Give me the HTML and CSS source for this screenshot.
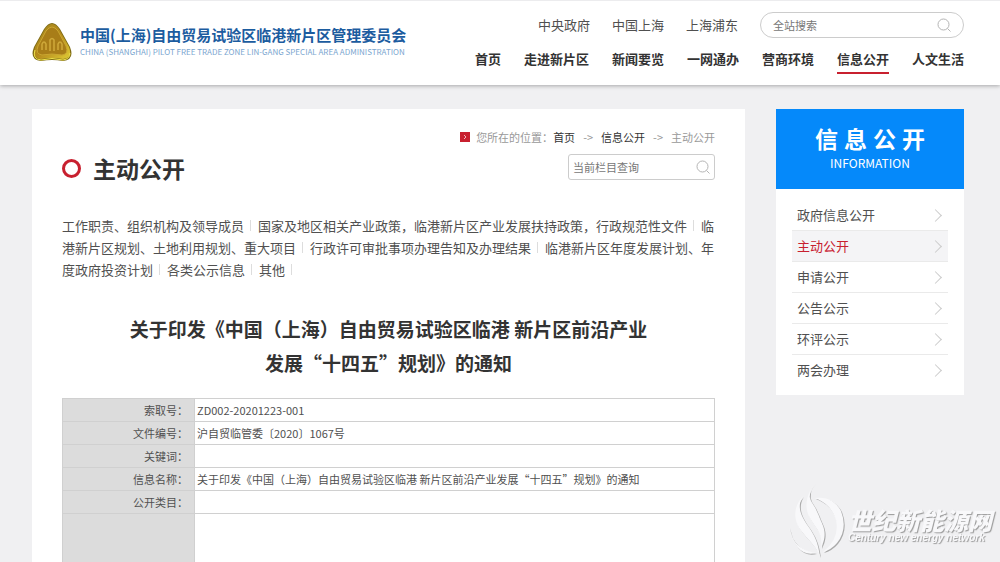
FILE: index.html
```html
<!DOCTYPE html>
<html lang="zh-CN">
<head>
  <meta charset="UTF-8" />
  <meta name="viewport" content="width=device-width, initial-scale=1.0" />
  <title>主动公开 - 中国(上海)自由贸易试验区临港新片区管理委员会</title>
  <link rel="stylesheet" href="styles.css">
</head>
<body>
  <header class="site-header">
    <a href="#" class="brand">
      <svg class="brand-logo" viewBox="0 0 40 40" aria-hidden="true">
        <defs>
          <linearGradient id="gold" x1="0" y1="0" x2="1" y2="1">
            <stop offset="0" stop-color="#a58a20" />
            <stop offset="0.5" stop-color="#b58a1c" />
            <stop offset="1" stop-color="#e0cc35" />
          </linearGradient>
        </defs>
        <path d="M12 7Q20-5 28 7L38 25Q43 38 31 39Q20 37 9 39Q-3 38 2 25Z" fill="#7d6a14" />
        <path d="M13 7Q20-3 27 7L37 25Q41 36 31 37Q20 35 9 37Q0 36 3 25Z" fill="url(#gold)" />
        <path d="M14 9Q20 1 26 9L34 24Q37 32 30 33Q20 31 10 33Q3 32 6 24Z" fill="#a87d18" stroke="#c9a530" />
        <path d="M10 28V22Q12 18 14 22V28M18 29V18Q20 15 22 18V29M26 28V22Q28 18 30 22V28" fill="none" stroke="#cfa93a" stroke-width="1.5" />
        <path d="M3 28Q0 37 9 38Q20 35 31 38Q38 37 38 31" fill="none" stroke="#f0e24c" />
      </svg>
      <span class="brand-text">
        <strong>中国(上海)自由贸易试验区临港新片区管理委员会</strong>
        <small>CHINA (SHANGHAI) PILOT FREE TRADE ZONE LIN-GANG SPECIAL AREA ADMINISTRATION</small>
      </span>
    </a>

    <div class="header-right">
      <div class="top-row">
        <a href="#">中央政府</a>
        <a href="#">中国上海</a>
        <a href="#">上海浦东</a>
        <form class="search site-search">
          <input type="text" placeholder="全站搜索" aria-label="全站搜索">
          <button type="button" aria-label="搜索">
            <svg viewBox="0 0 14 14"><circle cx="6.5" cy="6.5" r="5.5" /><path d="M10.5 10.5L13.5 13.5" /></svg>
          </button>
        </form>
      </div>
      <nav class="main-nav">
        <a href="#">首页</a>
        <a href="#">走进新片区</a>
        <a href="#">新闻要览</a>
        <a href="#">一网通办</a>
        <a href="#">营商环境</a>
        <a href="#" class="active">信息公开</a>
        <a href="#">人文生活</a>
      </nav>
    </div>
  </header>

  <div class="layout">
    <main class="content">
      <div class="content-head">
        <h1>主动公开</h1>
        <div class="head-tools">
          <div class="breadcrumb">
            <svg viewBox="0 0 10 10" aria-hidden="true"><rect width="10" height="10" fill="#c8202f" /><path d="M4 3L6 5L4 7" fill="none" stroke="#f3b5bb" /></svg>
            <span>您所在的位置：</span>
            <a href="#">首页</a>
            <span class="arrow">-&gt;</span>
            <a href="#">信息公开</a>
            <span class="arrow">-&gt;</span>
            <span>主动公开</span>
          </div>
          <form class="search column-search">
            <input type="text" placeholder="当前栏目查询" aria-label="当前栏目查询">
            <button type="button" aria-label="查询">
              <svg viewBox="0 0 14 14"><circle cx="6.5" cy="6.5" r="5.5" /><path d="M10.5 10.5L13.5 13.5" /></svg>
            </button>
          </form>
        </div>
      </div>

      <div class="categories">
        <a href="#">工作职责、组织机构及领导成员</a>
        <a href="#">国家及地区相关产业政策，临港新片区产业发展扶持政策，行政规范性文件</a>
        <a href="#">临港新片区规划、土地利用规划、重大项目</a>
        <a href="#">行政许可审批事项办理告知及办理结果</a>
        <a href="#">临港新片区年度发展计划、年度政府投资计划</a>
        <a href="#">各类公示信息</a>
        <a href="#">其他</a>
      </div>

      <h2>关于印发《中国（上海）自由贸易试验区临港 新片区前沿产业<br>发展“十四五”规划》的通知</h2>

      <table class="info">
        <tr><th scope="row">索取号：</th><td>ZD002-20201223-001</td></tr>
        <tr><th scope="row">文件编号：</th><td>沪自贸临管委〔2020〕1067号</td></tr>
        <tr><th scope="row">关键词：</th><td></td></tr>
        <tr><th scope="row">信息名称：</th><td>关于印发《中国（上海）自由贸易试验区临港 新片区前沿产业发展“十四五”规划》的通知</td></tr>
        <tr><th scope="row">公开类目：</th><td></td></tr>
        <tr class="info-body"><th></th><td></td></tr>
      </table>
    </main>

    <aside class="sidebar">
      <div class="sidebar-title">
        <strong>信息公开</strong>
        <span>INFORMATION</span>
      </div>
      <ul>
        <li><a href="#">政府信息公开</a></li>
        <li class="active"><a href="#">主动公开</a></li>
        <li><a href="#">申请公开</a></li>
        <li><a href="#">公告公示</a></li>
        <li><a href="#">环评公示</a></li>
        <li><a href="#">两会办理</a></li>
      </ul>
    </aside>
  </div>

  <div class="watermark">
    <svg viewBox="0 0 58 76" aria-hidden="true">
      <path d="M27 1Q19 10 23 19Q28 26 31 34C34 43 41 50 33 66C35 52 29 48 23 38C16 27 17 14 27 1Z" />
      <path d="M15 14C8 25 14 35 20 44C27 54 30 60 32 75C28 64 22 60 14 50C4 37 6 24 15 14Z" />
      <path d="M27 16Q45 14 53 29Q60 47 49 61Q43 68 35 70Q52 57 48 38Q43 22 27 16Z" />
      <path d="M1 45Q4 67 28 71Q8 76 1 45Z" />
    </svg>
    <div>
      <strong>世纪新能源网</strong>
      <span>Century new energy network</span>
    </div>
  </div>
</body>
</html>
```
FILE: styles.css
```css
:root {
  --red: #c8202f;
  --blue: #0589fa;
  --text: #505050;
  --line: #d0d0d0;
}

*,
*::before,
*::after {
  box-sizing: border-box;
}

body {
  margin: 0;
  min-height: 100vh;
  display: flex;
  flex-direction: column;
  background: #f0f0f2;
  font-family: "Noto Sans CJK SC", sans-serif;
  font-size: 13px;
  line-height: 22px;
  color: var(--text);
}

a {
  color: inherit;
  text-decoration: none;
}

input,
button {
  font-family: inherit;
  border: 0;
  padding: 0;
  background: none;
}

/* header */
.site-header {
  display: flex;
  justify-content: space-between;
  padding: 11px 36px 11px 32px;
  background: #fff;
  border-top: 1px solid #ececee;
  box-shadow: 0 1px 4px rgba(0, 0, 0, 0.3);
}

.brand {
  display: flex;
  align-items: center;
  gap: 8px;
  padding-bottom: 2px;
}

.brand-logo {
  width: 40px;
  height: 40px;
}

.brand-text {
  display: flex;
  flex-direction: column;
  white-space: nowrap;
}

.brand-text strong {
  font-size: 15px;
  line-height: 20px;
  color: #1c5c9f;
}

.brand-text small {
  font-size: 8px;
  line-height: 14px;
  color: #7ba6cf;
}

.top-row {
  display: flex;
  justify-content: flex-end;
  align-items: center;
  gap: 22px;
}

.search {
  display: flex;
  align-items: center;
  border: 1px solid #ccc;
  background: #fff;
}

.search input {
  flex: 1;
  min-width: 0;
  font-size: 11px;
  outline: none;
}

.search input::placeholder {
  color: #777;
}

.search button {
  width: 14px;
  height: 14px;
}

.search svg {
  display: block;
  fill: none;
  stroke: #b5b5b5;
}

.site-search {
  width: 204px;
  height: 26px;
  padding: 0 12px;
  border-radius: 13px;
}

.main-nav {
  display: flex;
  justify-content: flex-end;
  gap: 23px;
  margin-top: 10px;
  font-weight: bold;
  color: #333;
}

.main-nav a {
  padding-bottom: 2px;
  border-bottom: 2px solid transparent;
}

.main-nav .active {
  border-color: var(--red);
}

/* page */
.layout {
  flex: 1;
  display: flex;
  align-items: flex-start;
  gap: 31px;
  padding: 24px 36px 0 32px;
}

.content {
  flex: 1;
  align-self: stretch;
  padding: 17px 30px 0;
  background: #fff;
}

.content-head {
  display: flex;
  justify-content: space-between;
}

h1 {
  display: flex;
  align-items: center;
  gap: 12px;
  margin: 25px 0 0;
  font-size: 23px;
  line-height: 34px;
  color: #333;
}

h1::before {
  content: "";
  width: 19px;
  height: 19px;
  border: 3px solid var(--red);
  border-radius: 50%;
}

.head-tools {
  display: flex;
  flex-direction: column;
  align-items: flex-end;
  gap: 6px;
}

.breadcrumb {
  display: flex;
  align-items: center;
  font-size: 11px;
  color: #999;
}

.breadcrumb svg {
  width: 10px;
  height: 10px;
  margin-right: 6px;
}

.breadcrumb a {
  color: #333;
}

.breadcrumb .arrow {
  margin: 0 8px;
}

.column-search {
  width: 147px;
  height: 26px;
  padding: 0 4px;
  border-radius: 3px;
}

.categories {
  margin-top: 30px;
}

.categories a::after {
  content: "";
  display: inline-block;
  width: 1px;
  height: 11px;
  margin: 0 4px 0 6px;
  background: #ddd;
}

h2 {
  margin: 31px 0 18px;
  font-size: 19px;
  line-height: 34px;
  text-align: center;
  color: #333;
}

.info {
  width: 100%;
  border-collapse: collapse;
  font-size: 11px;
  line-height: 20px;
}

.info th,
.info td {
  height: 23px;
  padding: 0 2px;
  border: 1px solid var(--line);
}

.info th {
  width: 132px;
  padding-right: 6px;
  background: #dcdcdc;
  font-weight: normal;
  text-align: right;
}

.info .info-body td,
.info .info-body th {
  height: 48px;
  border-bottom: 0;
}

/* sidebar */
.sidebar {
  width: 188px;
  background: #fff;
}

.sidebar-title {
  display: flex;
  flex-direction: column;
  align-items: center;
  height: 80px;
  padding-top: 14px;
  background: var(--blue);
  color: #fff;
}

.sidebar-title strong {
  padding-left: 6px;
  font-size: 23px;
  line-height: 30px;
  letter-spacing: 6px;
}

.sidebar-title span {
  font-size: 12px;
  line-height: 20px;
}

.sidebar ul {
  margin: 0;
  padding: 11px 16px 10px;
  list-style: none;
}

.sidebar li + li {
  border-top: 1px solid #eaeaea;
}

.sidebar li a {
  display: flex;
  justify-content: space-between;
  align-items: center;
  height: 30px;
  padding: 0 8px 0 5px;
}

.sidebar li a::after {
  content: "";
  width: 9px;
  height: 9px;
  border: solid #ccc;
  border-width: 1px 1px 0 0;
  transform: rotate(45deg);
}

.sidebar .active {
  background: #f4f4f6;
  color: var(--red);
}

/* watermark */
.watermark {
  position: fixed;
  right: 8px;
  bottom: 4px;
  display: flex;
  align-items: flex-end;
  gap: 2px;
  color: #f8f8fa;
  font-style: italic;
  font-weight: bold;
  white-space: nowrap;
  text-shadow: 1px 1px 1px #999;
  pointer-events: none;
}

.watermark svg {
  width: 58px;
  height: 76px;
  fill: #f8f8fa;
  filter: drop-shadow(1px 1px 0 #aaa);
}

.watermark div {
  padding-bottom: 14px;
}

.watermark strong,
.watermark span {
  display: block;
}

.watermark strong {
  font-size: 24px;
  line-height: 24px;
}

.watermark span {
  font-family: "Liberation Sans", sans-serif;
  font-size: 10px;
  line-height: 12px;
}
```
